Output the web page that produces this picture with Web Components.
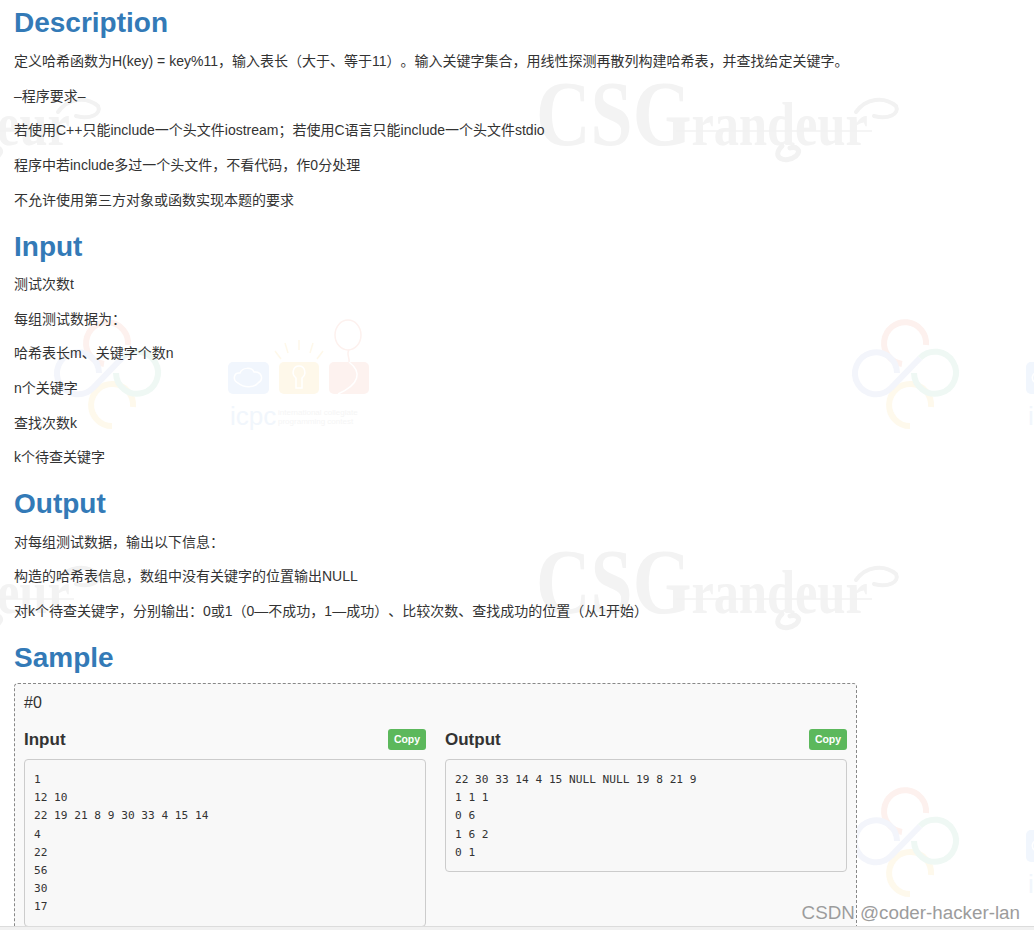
<!DOCTYPE html>
<html lang="zh">
<head>
<meta charset="utf-8">
<title>Problem</title>
<style>
    html, body { margin: 0; height: 930px; overflow: hidden; background: #fff; }
    body { color: #333; font: 14px/20px "Liberation Sans", "Noto Sans CJK SC", sans-serif; text-spacing-trim: space-all; }
</style>
</head>
<body>
<problem-page>
    <problem-section heading="Description" first>
        <problem-line>定义哈希函数为H(key) = key%11，输入表长（大于、等于11）。输入关键字集合，用线性探测再散列构建哈希表，并查找给定关键字。</problem-line>
        <problem-line>–程序要求–</problem-line>
        <problem-line>若使用C++只能include一个头文件iostream；若使用C语言只能include一个头文件stdio</problem-line>
        <problem-line>程序中若include多过一个头文件，不看代码，作0分处理</problem-line>
        <problem-line>不允许使用第三方对象或函数实现本题的要求</problem-line>
    </problem-section>
    <problem-section heading="Input">
        <problem-line>测试次数t</problem-line>
        <problem-line>每组测试数据为：</problem-line>
        <problem-line>哈希表长m、关键字个数n</problem-line>
        <problem-line>n个关键字</problem-line>
        <problem-line>查找次数k</problem-line>
        <problem-line>k个待查关键字</problem-line>
    </problem-section>
    <problem-section heading="Output">
        <problem-line>对每组测试数据，输出以下信息：</problem-line>
        <problem-line>构造的哈希表信息，数组中没有关键字的位置输出NULL</problem-line>
        <problem-line>对k个待查关键字，分别输出：0或1（0—不成功，1—成功）、比较次数、查找成功的位置（从1开始）</problem-line>
    </problem-section>
    <problem-section heading="Sample">
        <sample-box label="#0">
            <sample-pane heading="Input">1
12 10
22 19 21 8 9 30 33 4 15 14
4
22
56
30
17</sample-pane>
            <sample-pane heading="Output">22 30 33 14 4 15 NULL NULL 19 8 21 9
1 1 1
0 6
1 6 2
0 1</sample-pane>
        </sample-box>
    </problem-section>
</problem-page>
<script>
(function () {
    'use strict';

    // one tile of the page background, repeated every 798 x 468
    const TILE = `
        <g id="tile">
            <text transform="translate(536 145) scale(.9 1.1)" fill="#f3f3f3" font-family="'Liberation Serif', serif" font-weight="700"><tspan font-size="84">CSG</tspan><tspan font-size="56">randeur</tspan></text>
            <g fill="none" stroke="#f2f2f2">
                <path stroke-width="1.5" d="M676 131 H872"/>
                <path stroke-width="4" stroke-linecap="round" d="M856 112 C866 98 884 96 896 106 C900 114 888 120 874 116"/>
                <path stroke-width="5" stroke-linecap="round" d="M782 146 C770 158 786 164 796 156 C802 150 796 146 790 148"/>
            </g>
            <g fill="none" stroke-width="6">
                <path stroke="#fdf1ee" d="M128 345 A21 21 0 1 0 104 364"/>
                <path stroke="#fef9ec" d="M133 407 A21 21 0 1 0 112 426"/>
                <path stroke="#f3f5fb" d="M99 373 A21 21 0 1 0 93 388 L122 358"/>
                <path stroke="#eff8f4" d="M122 358 A21 21 0 1 1 116 373"/>
            </g>
            <rect x="228" y="362" width="41" height="32" rx="5" fill="#f1f6fd"/>
            <rect x="279" y="362" width="40" height="32" rx="5" fill="#fef8ea"/>
            <rect x="329" y="362" width="40" height="32" rx="5" fill="#fdf2ef"/>
            <path fill="none" stroke="#fff" stroke-width="1.5" d="M238 383 C232 380 234 372 240 373 C242 367 252 367 254 372 C262 371 264 380 258 383 C254 388 244 388 238 383Z"/>
            <path fill="none" stroke="#fff" stroke-width="1.5" d="M299 366 C293 366 291 374 296 378 V388 H302 V378 C307 374 305 366 299 366Z"/>
            <g fill="none" stroke="#fef8ea" stroke-width="1.5">
                <path d="M299 340 V350 M285 343 L288 353 M313 343 L310 353 M275 351 L281 359 M323 351 L317 359"/>
            </g>
            <ellipse cx="348" cy="335" rx="13" ry="15" fill="none" stroke="#fdf1ee" stroke-width="1.5"/>
            <path fill="none" stroke="#fff" stroke-width="1.5" d="M349 362 C362 372 360 384 338 394"/>
            <path fill="none" stroke="#fdf1ee" stroke-width="1.5" d="M349 350 C346 354 350 358 349 362"/>
            <text x="230" y="425" font-family="'Liberation Sans', sans-serif" font-size="26" fill="#f1f6fc">icpc</text>
            <g font-family="'Liberation Sans', sans-serif" font-size="8" fill="#f5f5f5">
                <text x="278" y="415">international collegiate</text>
                <text x="278" y="424">programming contest</text>
            </g>
        </g>`;

    class ProblemPage extends HTMLElement {
        constructor() {
            super();
            this.attachShadow({ mode: 'open' });
        }

        connectedCallback() {
            const copies = [];
            [-798, 0, 798].forEach((x) => {
                [0, 468].forEach((y) => {
                    if (x !== 0 || y !== 0) copies.push(`<use href="#tile" x="${x}" y="${y}"/>`);
                });
            });
            this.shadowRoot.innerHTML = `
                <style>
                    :host { display: block; position: relative; height: 930px; overflow: hidden; }
                    .bg { position: absolute; left: 0; top: 0; }
                    .content { position: relative; padding: 7px 0 0 14px; width: 843px; }
                    .strip { position: absolute; left: 0; right: 0; bottom: 0; height: 3px; background: #f1f1f1; border-top: 1px solid #dcdcdc; }
                    .mark { position: absolute; right: 14px; top: 902px; color: #9c9c9c; font: 18.8px/22px "Liberation Sans", sans-serif; text-shadow: 0 0 1px #fff; }
                </style>
                <svg class="bg" width="1034" height="930" viewBox="0 0 1034 930" aria-hidden="true">${TILE}${copies.join('')}</svg>
                <div class="content"><slot></slot></div>
                <div class="strip"></div>
                <div class="mark">CSDN @coder-hacker-lan</div>
            `;
        }
    }

    class ProblemSection extends HTMLElement {
        constructor() {
            super();
            this.attachShadow({ mode: 'open' });
        }

        connectedCallback() {
            this.shadowRoot.innerHTML = `
                <style>
                    :host { display: block; }
                    h2 { margin: 21px 0 12.2px; color: #337ab7; font: 700 28px/31px "Liberation Sans", sans-serif; }
                    :host([first]) h2 { margin: 0 0 13px; }
                </style>
                <h2>${this.getAttribute('heading')}</h2>
                <slot></slot>
            `;
        }
    }

    class ProblemLine extends HTMLElement {
        constructor() {
            super();
            this.attachShadow({ mode: 'open' });
        }

        connectedCallback() {
            this.shadowRoot.innerHTML = `
                <style>:host { display: block; margin-bottom: 14.7px; white-space: nowrap; }</style>
                <slot></slot>
            `;
        }
    }

    class SampleBox extends HTMLElement {
        constructor() {
            super();
            this.attachShadow({ mode: 'open' });
        }

        connectedCallback() {
            this.shadowRoot.innerHTML = `
                <style>
                    :host { display: block; box-sizing: border-box; width: 843px; padding: 8px 9px 15px; margin-top: -1.7px; background: #f9f9f9; border: 1px dashed #888; border-radius: 4px; }
                    .label { font-size: 16px; line-height: 22px; margin-bottom: 15px; }
                    .panes { display: grid; grid-template-columns: 402px 402px; column-gap: 19px; align-items: start; }
                </style>
                <div class="label">${this.getAttribute('label')}</div>
                <div class="panes"><slot></slot></div>
            `;
        }
    }

    class SamplePane extends HTMLElement {
        constructor() {
            super();
            this.attachShadow({ mode: 'open' });
        }

        connectedCallback() {
            this.shadowRoot.innerHTML = `
                <style>
                    :host { display: block; }
                    header { display: flex; justify-content: space-between; align-items: center; height: 21px; margin-bottom: 9px; }
                    h3 { margin: 0; font: 700 17px/21px "Liberation Sans", sans-serif; color: #333; }
                    button { width: 38px; height: 21px; padding: 0; border: 0; border-radius: 3px; background: #5cb85c; color: #fff; font: 700 10.5px/21px "Liberation Sans", sans-serif; }
                    .code { box-sizing: border-box; padding: 10.5px 9px 9px; background: #f8f8f8; border: 1px solid #ccc; border-radius: 4px; color: #333; font: 11.15px/18.2px "DejaVu Sans Mono", monospace; white-space: pre; }
                </style>
                <header><h3>${this.getAttribute('heading')}</h3><button type="button">Copy</button></header>
                <div class="code"><slot></slot></div>
            `;
        }
    }

    customElements.define('problem-page', ProblemPage);
    customElements.define('problem-section', ProblemSection);
    customElements.define('problem-line', ProblemLine);
    customElements.define('sample-box', SampleBox);
    customElements.define('sample-pane', SamplePane);
})();
</script>
</body>
</html>
